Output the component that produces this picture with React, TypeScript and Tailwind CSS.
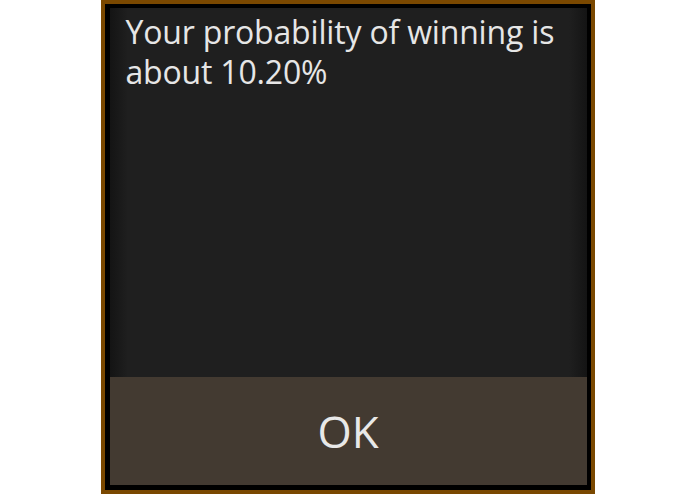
export default function App() {
  return (
    <div className="w-full h-[494px] bg-white flex justify-center" style={{ fontFamily: '"Open Sans", "Noto Sans", sans-serif' }}>
      <div className="w-[494px] h-[494px] bg-[#7a4800] p-[4px]">
        <div className="w-full h-full bg-black pl-[5px] pr-[4px] pt-[4px] pb-[5px] flex flex-col">
          {/* message area with darker side edges */}
          <div className="flex-1 bg-[linear-gradient(to_right,#141414_0px,#1f1f1f_18px,#1f1f1f_calc(100%-18px),#141414_100%)] pl-[16px] pr-[12px] pt-[4px]">
            <p className="text-[32px] leading-[40px] tracking-[-0.18px] text-[#e6e6e6]">
              Your probability of winning is about 10.20%
            </p>
          </div>
          <button className="h-[108px] w-full bg-[#433a31] text-[44px] text-[#e8e8e8] flex items-center justify-center">
            OK
          </button>
        </div>
      </div>
    </div>
  );
}
